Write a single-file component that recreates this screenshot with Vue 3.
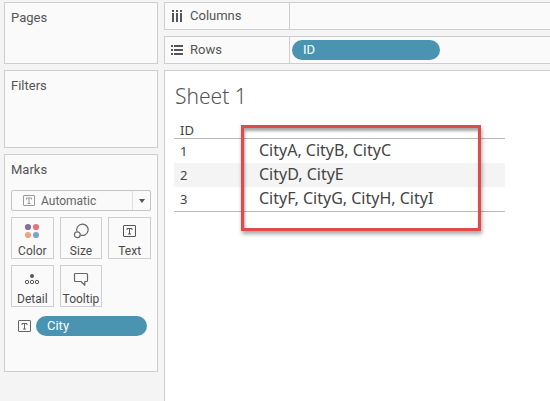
<script setup>
import { ref } from 'vue'

const markType = ref('Automatic')
const rows = [
  { id: 1, cities: 'CityA, CityB, CityC' },
  { id: 2, cities: 'CityD, CityE' },
  { id: 3, cities: 'CityF, CityG, CityH, CityI' },
]
</script>

<template>
  <div class="workspace">
    <aside class="side">
      <section class="card pages"><h2>Pages</h2></section>
      <section class="card filters"><h2>Filters</h2></section>
      <section class="card marks">
        <h2><label for="mark-type">Marks</label></h2>
        <div class="picker">
          <select id="mark-type" v-model="markType">
            <option>Automatic</option>
          </select>
          <svg class="picker-icon" width="12" height="12" viewBox="0 0 12 12" fill="none" stroke="#999">
            <rect x=".5" y=".5" width="11" height="10" rx=".5" />
            <path d="M3.5 4.5V3h5v1.5M6 3v5.5M4.5 8.5h3" />
          </svg>
          <span class="picker-arrow"></span>
        </div>
        <div class="buttons">
          <button type="button">
            <svg width="16" height="16" viewBox="0 0 16 16">
              <circle cx="4" cy="4" r="3.1" fill="#85719a" />
              <circle cx="12" cy="4" r="3.1" fill="#e8737c" />
              <circle cx="4" cy="12" r="3.1" fill="#eba67c" />
              <circle cx="12" cy="12" r="3.1" fill="#82a4c8" />
            </svg>
            <span>Color</span>
          </button>
          <button type="button">
            <svg width="16" height="16" viewBox="0 0 16 16" fill="none" stroke="#666" stroke-width="1.2">
              <path d="M3.9 8A5.7 5.7 0 1 1 7.5 12.1" />
              <circle cx="4.3" cy="11.8" r="2.9" />
            </svg>
            <span>Size</span>
          </button>
          <button type="button">
            <svg width="16" height="16" viewBox="0 0 16 16" fill="none" stroke="#555">
              <rect x="1.5" y="2.5" width="12" height="11" rx=".5" />
              <path d="M5 7V5.5h5V7M7.5 5.5v5.5M6 11h3" />
            </svg>
            <span>Text</span>
          </button>
          <button type="button">
            <svg width="16" height="16" viewBox="0 0 16 16" fill="none" stroke="#555">
              <circle cx="8" cy="5" r="2" fill="#555" stroke="none" />
              <circle cx="3" cy="11" r="1.7" />
              <circle cx="8" cy="11" r="1.7" />
              <circle cx="13" cy="11" r="1.7" />
            </svg>
            <span>Detail</span>
          </button>
          <button type="button">
            <svg width="16" height="16" viewBox="0 0 16 16" fill="none" stroke="#666" stroke-width="1.2" stroke-linejoin="round">
              <path d="M2.5 2.5h11a1 1 0 0 1 1 1v6a1 1 0 0 1-1 1h-1.7v3.7L8 10.5H2.5a1 1 0 0 1-1-1v-6a1 1 0 0 1 1-1z" />
            </svg>
            <span>Tooltip</span>
          </button>
        </div>
        <div class="mark-field">
          <svg width="13" height="12" viewBox="0 0 13 12" fill="none" stroke="#666">
            <rect x=".5" y=".5" width="12" height="11" rx=".5" />
            <path d="M4 5V3.5h5V5M6.5 3.5V9M5 9h3" />
          </svg>
          <span class="pill">City</span>
        </div>
      </section>
    </aside>

    <main class="main">
      <section class="shelf">
        <h2 class="shelf-name">
          <svg width="12" height="12" viewBox="0 0 12 12" fill="#555">
            <path d="M1 0h2v2H1zM5 0h2v2H5zM9 0h2v2H9zM1 3h2v9H1zM5 3h2v9H5zM9 3h2v9H9z" />
          </svg>
          Columns
        </h2>
        <div class="drop"></div>
      </section>
      <section class="shelf">
        <h2 class="shelf-name">
          <svg width="12" height="12" viewBox="0 0 12 12" fill="#555">
            <path d="M0 1h2v2H0zM0 5h2v2H0zM0 9h2v2H0zM3 1h9v2H3zM3 5h9v2H3zM3 9h9v2H3z" />
          </svg>
          Rows
        </h2>
        <div class="drop"><span class="pill">ID</span></div>
      </section>
      <section class="sheet">
        <h1>Sheet 1</h1>
        <div class="view">
          <table>
            <thead>
              <tr><th scope="col">ID</th><td></td></tr>
            </thead>
            <tbody>
              <tr v-for="row in rows" :key="row.id">
                <th scope="row">{{ row.id }}</th>
                <td>{{ row.cities }}</td>
              </tr>
            </tbody>
          </table>
          <div class="highlight"></div>
        </div>
      </section>
    </main>
  </div>
</template>

<style>
body {
  background: #f4f4f4;
}
</style>

<style scoped>
* {
  box-sizing: border-box;
}

.workspace {
  display: flex;
  gap: 6px;
  min-height: 100vh;
  padding: 2px 0 0 4px;
  color: #555;
  font-family: Roboto, "Liberation Sans", sans-serif;
  font-size: 12px;
}

h1,
h2 {
  margin: 0;
  font-size: 13px;
  font-weight: 400;
  line-height: 16px;
}

.side {
  display: flex;
  flex: 0 0 154px;
  flex-direction: column;
  gap: 6px;
}

.card {
  padding: 7px 6px;
  border: 1px solid #cecece;
  background: #fafafa;
}

.pages {
  min-height: 62px;
}

.filters {
  min-height: 78px;
}

.marks {
  min-height: 218px;
}

.picker {
  position: relative;
  height: 21px;
  margin-top: 12px;
}

select {
  width: 100%;
  height: 100%;
  padding: 0 20px 0 29px;
  border: 1px solid #c4c4c4;
  border-radius: 2px;
  appearance: none;
  background: #fafafa;
  color: #666;
  font: inherit;
}

.picker-icon {
  position: absolute;
  top: 5px;
  left: 12px;
  pointer-events: none;
}

.picker-arrow {
  position: absolute;
  top: 1px;
  right: 1px;
  bottom: 1px;
  display: grid;
  place-items: center;
  width: 18px;
  border-left: 1px solid #ddd;
  pointer-events: none;
}

.picker-arrow::after {
  border: 3px solid transparent;
  border-top: 4px solid #555;
  border-bottom: 0;
  content: "";
}

.buttons {
  display: grid;
  grid-template-columns: repeat(3, 1fr);
  gap: 6px;
  margin-top: 6px;
}

button {
  display: flex;
  flex-direction: column;
  align-items: center;
  gap: 5px;
  min-width: 0;
  height: 42px;
  padding: 5px 0 0;
  border: 1px solid #cecece;
  background: #fafafa;
  color: #4a4a4a;
  font: inherit;
  line-height: 14px;
}

.mark-field {
  display: flex;
  align-items: center;
  gap: 5px;
  margin-top: 9px;
  padding: 0 4px 0 7px;
}

.pill {
  flex: 1;
  height: 20px;
  padding: 0 11px;
  border-radius: 10px;
  background: #4a94b2;
  color: #fff;
  font-size: 13px;
  line-height: 20px;
}

.main {
  display: flex;
  flex: 1;
  flex-direction: column;
  gap: 6px;
  min-width: 0;
}

.shelf {
  display: flex;
  height: 28px;
  border: 1px solid #cecece;
  border-right: 0;
  background: #fafafa;
}

.shelf-name {
  display: flex;
  flex: 0 0 125px;
  align-items: center;
  gap: 7px;
  padding-left: 6px;
  border-right: 1px solid #cecece;
}

.drop {
  display: flex;
  flex: 1;
  align-items: center;
  padding: 0 2px;
}

.drop .pill {
  max-width: 148px;
}

.sheet {
  flex: 1;
  padding: 12px 45px 0 9px;
  border: 1px solid #cecece;
  border-width: 1px 0 0 1px;
  background: #fff;
}

h1 {
  padding-left: 1px;
  font-family: "Noto Sans", "Open Sans", sans-serif;
  font-size: 21px;
  font-weight: 300;
  line-height: 26px;
}

.view {
  position: relative;
  margin-top: 12px;
}

table {
  width: 100%;
  border-collapse: separate;
  border-spacing: 0;
  border-bottom: 1px solid #b8b8b8;
  color: #444;
  font-family: "Noto Sans", "Open Sans", sans-serif;
}

th {
  width: 78px;
  height: 24px;
  padding: 0 6px;
  font-size: 13px;
  font-weight: 400;
  line-height: 16px;
  text-align: left;
}

td {
  padding: 0 7px 2px;
  font-size: 16px;
  font-weight: 400;
  line-height: 20px;
}

thead th,
thead td {
  height: 18px;
  padding-bottom: 0;
  border-bottom: 1px solid #b8b8b8;
}

tbody tr:nth-child(even) {
  background: #f4f4f4;
}

.highlight {
  position: absolute;
  inset: 4px 24px -19px 67px;
  border: 3px solid #df4b4b;
  box-shadow: 1px 3px 4px rgb(0 0 0 / 35%), inset 1px 3px 3px rgb(0 0 0 / 35%);
  pointer-events: none;
}
</style>
